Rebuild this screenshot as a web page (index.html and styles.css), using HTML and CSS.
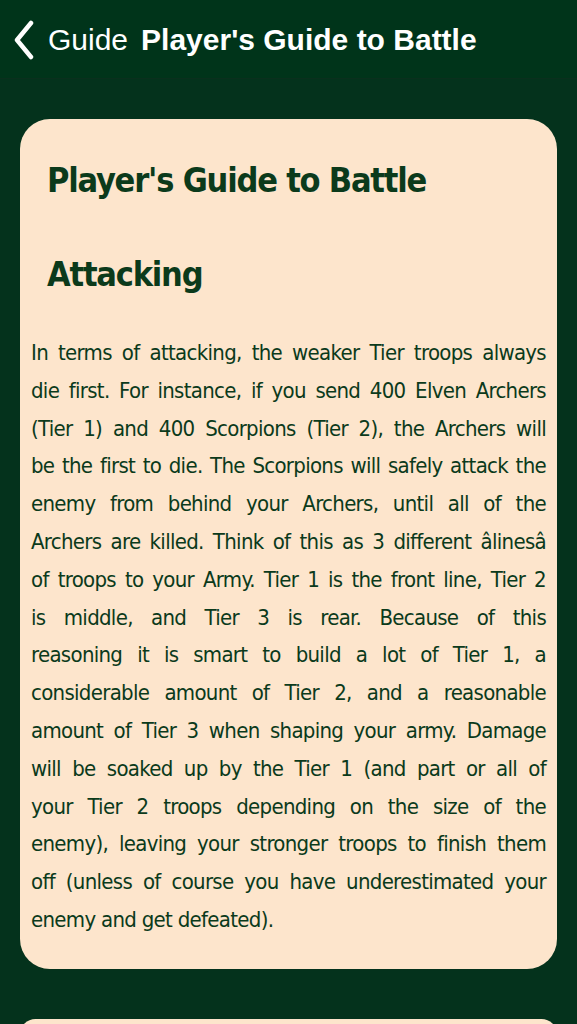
FILE: index.html
```html
<!DOCTYPE html>
<html lang="en">
<head>
<title>Player's Guide to Battle</title>
<link rel="stylesheet" href="styles.css">
</head>
<body>
<div class="navbar">
    <a class="back" href="#">
        <svg class="chevron" width="22" height="40" viewBox="0 0 22 40"><path d="M18 3 L4 20 L18 37" fill="none" stroke="#fff" stroke-width="4.5" stroke-linecap="round" stroke-linejoin="round"/></svg>
        <span>Guide</span>
    </a>
    <span class="nav-title">Player's Guide to Battle</span>
</div>

<div class="content">
    <div class="card">
        <h1>Player's Guide to Battle</h1>
        <h2>Attacking</h2>
        <p class="article">
            <span>In terms of attacking, the weaker Tier troops always</span>
            <span>die first. For instance, if you send 400 Elven Archers</span>
            <span>(Tier 1) and 400 Scorpions (Tier 2), the Archers will</span>
            <span>be the first to die. The Scorpions will safely attack the</span>
            <span>enemy from behind your Archers, until all of the</span>
            <span>Archers are killed. Think of this as 3 different âlinesâ</span>
            <span>of troops to your Army. Tier 1 is the front line, Tier 2</span>
            <span>is middle, and Tier 3 is rear. Because of this</span>
            <span>reasoning it is smart to build a lot of Tier 1, a</span>
            <span>considerable amount of Tier 2, and a reasonable</span>
            <span>amount of Tier 3 when shaping your army. Damage</span>
            <span>will be soaked up by the Tier 1 (and part or all of</span>
            <span>your Tier 2 troops depending on the size of the</span>
            <span>enemy), leaving your stronger troops to finish them</span>
            <span>off (unless of course you have underestimated your</span>
            <span class="last">enemy and get defeated).</span>
        </p>
    </div>
    <div class="card"></div>
</div>
</body>
</html>
```

FILE: styles.css
```css
body { margin: 0; background: #04321c; font-family: "Liberation Sans", Arial, sans-serif; }

.navbar { height: 78px; background: #00341a; border-bottom: 1px solid #0a2f1d; display: flex; align-items: center; color: #fff; font-size: 30px; }
.back { display: flex; align-items: center; color: #fff; text-decoration: none; padding-left: 13px; padding-top: 2px; }
.back span { margin-left: 13px; }
.nav-title { font-weight: bold; margin-left: 13px; padding-top: 2px; }

.content { padding: 40px 20px 0; }
.card { background: #fde5cc; border-radius: 30px; padding: 1px 11px 30px; margin-bottom: 50px; color: #0b3a1b; font-family: "DejaVu Sans Condensed", "DejaVu Sans", sans-serif; font-stretch: condensed; }

h1 { font-size: 34px; letter-spacing: -1.2px; line-height: 40px; margin: 40px 0 0 16px; }
h2 { font-size: 34px; letter-spacing: -1.2px; line-height: 40px; margin: 54px 0 0 16px; }

.article { font-size: 22px; letter-spacing: -0.7px; line-height: 37.8px; margin: 40px 0 0; }
.article span { display: block; white-space: nowrap; text-align: justify; text-align-last: justify; }
.article span.last { text-align-last: left; }
```
